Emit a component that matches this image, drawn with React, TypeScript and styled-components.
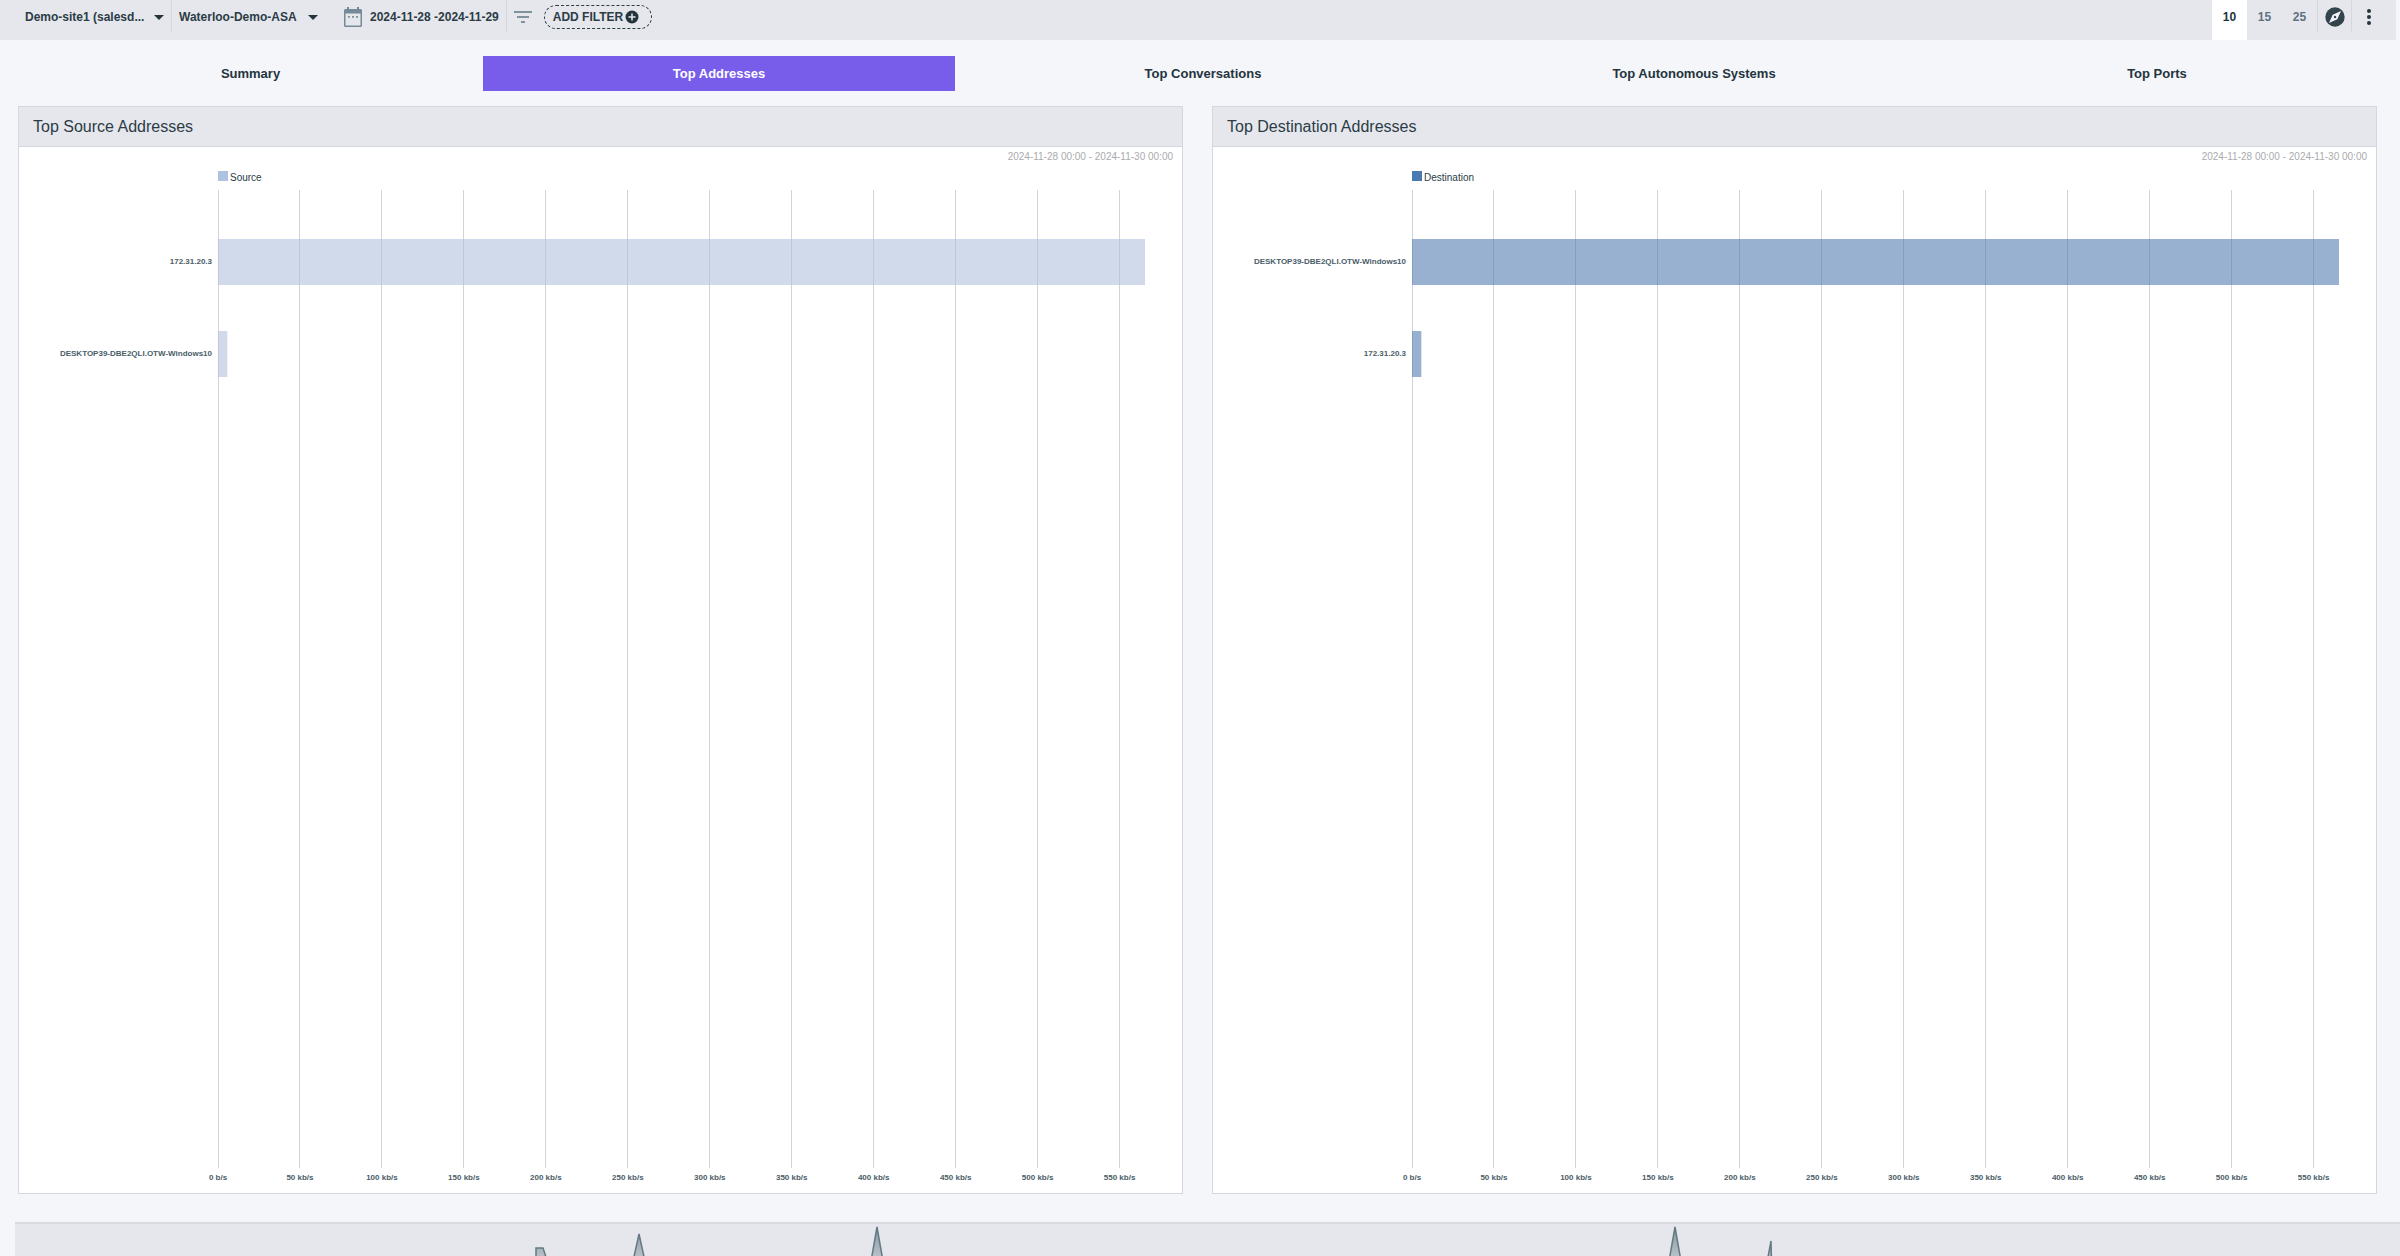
import React from "react";
import styled, { createGlobalStyle } from "styled-components";

const Global = createGlobalStyle`
  *, *::before, *::after { box-sizing: border-box; }
  body {
    margin: 0;
    background: #f5f6fa;
    color: #2b3c46;
    font-family: "Liberation Sans", Arial, Helvetica, sans-serif;
    overflow: hidden;
  }
  button { font: inherit; color: inherit; }
`;

const Page = styled.div`
  display: flex;
  flex-direction: column;
  height: 100vh;
  overflow: hidden;
`;

const Toolbar = styled.header`
  display: flex;
  align-items: stretch;
  justify-content: space-between;
  flex: none;
  height: 40px;
  margin-right: 4px;
  padding-left: 18px;
  background: #e6e7ec;
  font-size: 12px;
  font-weight: 700;
`;

const ToolGroup = styled.div`
  display: flex;
  align-items: stretch;
`;

const Cell = styled.div<{ $divided?: boolean }>`
  display: flex;
  align-items: center;
  gap: 12px;
  height: 32px;
  padding: 2px 7px 0;
  border-right: ${(p) => (p.$divided ? "1px solid #d4d7de" : "0")};
`;

const DateCell = styled(Cell)`
  margin-left: 12px;
`;

const Picker = styled.button`
  display: flex;
  align-items: center;
  justify-content: space-between;
  width: 139px;
  height: 24px;
  padding: 0;
  border: 0;
  background: none;
  white-space: nowrap;
`;

const Caret = styled.span`
  border: 5px solid transparent;
  border-top-color: #24343d;
  border-bottom: 0;
`;

const DateButton = styled.button`
  display: flex;
  align-items: center;
  gap: 8px;
  height: 24px;
  padding: 0;
  border: 0;
  background: none;
  white-space: nowrap;
`;

const IconButton = styled.button`
  display: flex;
  align-items: center;
  justify-content: center;
  height: 24px;
  padding: 0;
  border: 0;
  background: none;
`;

const AddFilter = styled.button`
  display: flex;
  align-items: center;
  gap: 2px;
  height: 24px;
  padding: 0 12px 0 8px;
  border: 1px dashed #2b3c46;
  border-radius: 12px;
  background: none;
  white-space: nowrap;
`;

const Count = styled.button<{ $active?: boolean }>`
  width: 35px;
  height: 40px;
  padding: 0 0 6px;
  border: 0;
  background: ${(p) => (p.$active ? "#ffffff" : "transparent")};
  color: ${(p) => (p.$active ? "#24343d" : "#5d727e")};
`;

const SideCell = styled.div`
  display: flex;
  align-items: center;
  justify-content: center;
  width: 34px;
  height: 32px;
  padding-top: 2px;
  border-left: 1px solid #d4d7de;
`;

const CountGroup = styled(ToolGroup)`
  padding-right: 11px;
`;

const Tabs = styled.nav`
  display: grid;
  grid-template-columns: 465fr 472fr 496fr 486fr 440fr;
  flex: none;
  margin: 16px 23px 15px 18px;
`;

const Tab = styled.button<{ $active?: boolean }>`
  height: 35px;
  padding: 0;
  border: 0;
  background: ${(p) => (p.$active ? "#775de9" : "transparent")};
  color: ${(p) => (p.$active ? "#ffffff" : "#24343d")};
  font-size: 13px;
  font-weight: 700;
`;

const Panels = styled.main`
  display: grid;
  grid-template-columns: 1fr 1fr;
  gap: 29px;
  flex: none;
  margin: 0 23px 28px 18px;
`;

const Panel = styled.section`
  border: 1px solid #d4d7e0;
  background: #ffffff;
`;

const PanelTitle = styled.h2`
  display: flex;
  align-items: center;
  height: 40px;
  margin: 0;
  padding-left: 14px;
  border-bottom: 1px solid #d4d7de;
  background: #e6e7ec;
  font-size: 16px;
  font-weight: 400;
`;

const Range = styled.div`
  padding: 4px 9px 0 0;
  color: #a9abae;
  font-size: 10px;
  line-height: 12px;
  text-align: right;
`;

const ChartArea = styled.div`
  padding: 8px 37px 0 199px;
`;

const Legend = styled.div`
  display: flex;
  align-items: flex-start;
  gap: 2px;
  height: 12px;
  font-size: 10px;
  line-height: 14px;
`;

const Swatch = styled.span<{ $color: string }>`
  width: 10px;
  height: 10px;
  background: ${(p) => p.$color};
`;

const Plot = styled.svg`
  display: block;
  width: 100%;
  height: 1003px;
  margin-top: 7px;
  overflow: visible;
  font-size: 8px;
  font-weight: 700;
  fill: #4a5d68;
`;

const Timeline = styled.section`
  flex: 1 0 35px;
  margin-left: 15px;
  border-top: 2px solid #d9dbe1;
  background: #e6e7ec;
`;

const TimelineChart = styled.svg`
  display: block;
  width: 100%;
  height: 36px;
`;

type Row = { name: string; value: number };

const MAX = 565.5;
const TICKS = Array.from({ length: 12 }, (_, i) => i * 50);

function BarChart({ rows, color }: { rows: Row[]; color: string }) {
  const at = (v: number) => `${(v / MAX) * 100}%`;
  return (
    <Plot role="img" aria-label="Traffic rate by address">
      {TICKS.map((t) => (
        <g key={t}>
          <line x1={at(t)} x2={at(t)} y1="0" y2="978" stroke="#d0d3dd" shapeRendering="crispEdges" />
          <text x={at(t)} y="990" textAnchor="middle">
            {t === 0 ? "0 b/s" : `${t} kb/s`}
          </text>
        </g>
      ))}
      {rows.map((r, i) => (
        <g key={r.name}>
          <rect x="0" y={49 + i * 92} width={at(r.value)} height="46" fill={color} />
          <text x="-6" y={74 + i * 92} textAnchor="end">
            {r.name}
          </text>
        </g>
      ))}
    </Plot>
  );
}

function AddressPanel(props: { title: string; series: string; swatch: string; bar: string; rows: Row[] }) {
  return (
    <Panel>
      <PanelTitle>{props.title}</PanelTitle>
      <Range>2024-11-28 00:00 - 2024-11-30 00:00</Range>
      <ChartArea>
        <Legend>
          <Swatch $color={props.swatch} />
          {props.series}
        </Legend>
        <BarChart rows={props.rows} color={props.bar} />
      </ChartArea>
    </Panel>
  );
}

const CalendarIcon = () => (
  <svg width="18" height="20" viewBox="0 0 18 20" fill="#748a96">
    <path d="M3 0h2v2h8V0h2v2h1.500a1.500 1.500 0 0 1 1.500 1.500v15a1.500 1.500 0 0 1-1.500 1.500h-15A1.500 1.500 0 0 1 0 18.500v-15A1.500 1.500 0 0 1 1.500 2H3zM1.500 6.500v12h15v-12z" />
    <path d="M4 9h1.800v1.800H4zM8.100 9h1.800v1.800H8.100zM12.200 9H14v1.800h-1.800z" />
  </svg>
);

const FilterIcon = () => (
  <svg width="18" height="12" viewBox="0 0 18 12" fill="#7f939e">
    <path d="M0 0h18v2H0zM3 5h12v2H3zM7 10h4v2H7z" />
  </svg>
);

const PlusIcon = () => (
  <svg width="14" height="14" viewBox="0 0 14 14">
    <circle cx="7" cy="7" r="6.500" fill="#24343d" />
    <path d="M7 3.500v7M3.500 7h7" stroke="#e6e7ec" strokeWidth="1.500" />
  </svg>
);

const CompassIcon = () => (
  <svg width="20" height="20" viewBox="0 0 20 20">
    <circle cx="10" cy="10" r="9.700" fill="#34444d" />
    <path d="M16 4 12.300 12.300 4 16 7.700 7.700z" fill="#f1f2f5" />
    <circle cx="10" cy="10" r="1.200" fill="#34444d" />
  </svg>
);

const MoreIcon = () => (
  <svg width="4" height="16" viewBox="0 0 4 16" fill="#24343d">
    <circle cx="2" cy="2" r="2" />
    <circle cx="2" cy="8" r="2" />
    <circle cx="2" cy="14" r="2" />
  </svg>
);

const PEAKS = [
  "521,60 521,24 528,24 540,60",
  "613,60 624,10 635,60",
  "852,60 862,3 872,60",
  "1650,60 1660,3 1670,60",
  "1748,60 1756,17 1757,60",
];

export default function App() {
  return (
    <Page>
      <Global />
      <Toolbar>
        <ToolGroup>
          <Cell $divided>
            <Picker>
              Demo-site1 (salesd...
              <Caret />
            </Picker>
          </Cell>
          <Cell>
            <Picker>
              Waterloo-Demo-ASA
              <Caret />
            </Picker>
          </Cell>
          <DateCell $divided>
            <DateButton>
              <CalendarIcon />
              2024-11-28 -2024-11-29
            </DateButton>
          </DateCell>
          <Cell>
            <IconButton aria-label="Filters">
              <FilterIcon />
            </IconButton>
            <AddFilter>
              ADD FILTER
              <PlusIcon />
            </AddFilter>
          </Cell>
        </ToolGroup>
        <CountGroup>
          <Count $active>10</Count>
          <Count>15</Count>
          <Count>25</Count>
          <SideCell>
            <IconButton aria-label="Explore">
              <CompassIcon />
            </IconButton>
          </SideCell>
          <SideCell>
            <IconButton aria-label="More">
              <MoreIcon />
            </IconButton>
          </SideCell>
        </CountGroup>
      </Toolbar>
      <Tabs>
        <Tab>Summary</Tab>
        <Tab $active>Top Addresses</Tab>
        <Tab>Top Conversations</Tab>
        <Tab>Top Autonomous Systems</Tab>
        <Tab>Top Ports</Tab>
      </Tabs>
      <Panels>
        <AddressPanel
          title="Top Source Addresses"
          series="Source"
          swatch="#b0c2e0"
          bar="rgba(176, 192, 220, 0.58)"
          rows={[
            { name: "172.31.20.3", value: 565.5 },
            { name: "DESKTOP39-DBE2QLI.OTW-Windows10", value: 5.7 },
          ]}
        />
        <AddressPanel
          title="Top Destination Addresses"
          series="Destination"
          swatch="#4a7ab2"
          bar="rgba(72, 116, 173, 0.56)"
          rows={[
            { name: "DESKTOP39-DBE2QLI.OTW-Windows10", value: 565.5 },
            { name: "172.31.20.3", value: 5.7 },
          ]}
        />
      </Panels>
      <Timeline>
        <TimelineChart viewBox="0 0 2385 36" preserveAspectRatio="none" role="img" aria-label="Traffic over time">
          <defs>
            <linearGradient id="peak" gradientUnits="userSpaceOnUse" x1="0" y1="0" x2="0" y2="40">
              <stop offset="0" stopColor="#84949e" />
              <stop offset="1" stopColor="#c3cad1" />
            </linearGradient>
          </defs>
          {PEAKS.map((p) => (
            <polygon key={p} points={p} fill="url(#peak)" stroke="#637983" strokeWidth="1.500" />
          ))}
        </TimelineChart>
      </Timeline>
    </Page>
  );
}
